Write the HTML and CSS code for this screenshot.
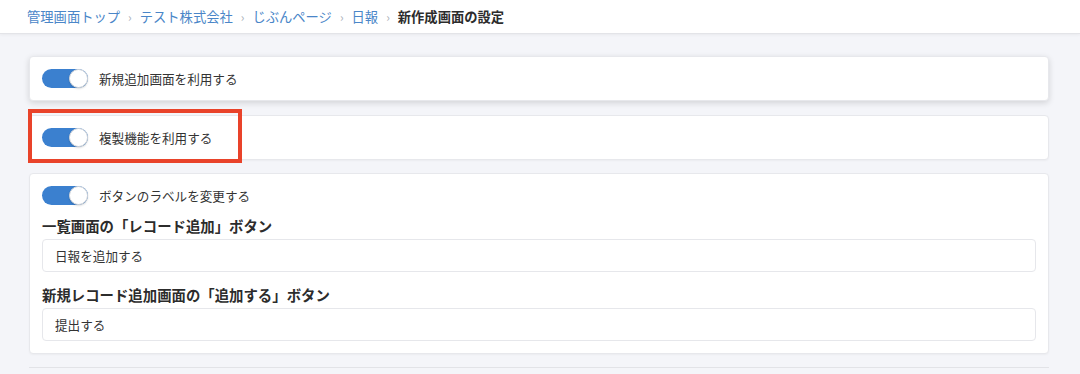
FILE: index.html
```html
<!DOCTYPE html>
<html lang="ja">
<head>
  <meta charset="UTF-8">
  <title>新作成画面の設定</title>
  <link rel="stylesheet" href="styles.css">
</head>
<body>
  <!-- Breadcrumb -->
  <nav class="breadcrumb">
    <a href="#">管理画面トップ</a>
    <span class="sep">›</span>
    <a href="#">テスト株式会社</a>
    <span class="sep">›</span>
    <a href="#">じぶんページ</a>
    <span class="sep">›</span>
    <a href="#">日報</a>
    <span class="sep">›</span>
    <span class="current">新作成画面の設定</span>
  </nav>

  <main class="content">
    <div class="card card-hover">
      <label class="switch-row">
        <span class="switch"><span class="knob"></span></span>
        <span>新規追加画面を利用する</span>
      </label>
    </div>

    <div class="card highlighted">
      <label class="switch-row">
        <span class="switch"><span class="knob"></span></span>
        <span>複製機能を利用する</span>
      </label>
      <div class="annotation"></div>
    </div>

    <div class="card">
      <label class="switch-row">
        <span class="switch"><span class="knob"></span></span>
        <span>ボタンのラベルを変更する</span>
      </label>
      <div class="field">
        <div class="field-label">一覧画面の「レコード追加」ボタン</div>
        <input class="field-input" type="text" value="日報を追加する">
      </div>
      <div class="field">
        <div class="field-label">新規レコード追加画面の「追加する」ボタン</div>
        <input class="field-input" type="text" value="提出する">
      </div>
    </div>

    <div class="divider"></div>
  </main>
</body>
</html>
```

FILE: styles.css
```css
/* General reset and layout */
* {
  margin: 0;
  padding: 0;
  box-sizing: border-box;
}
body {
  font-family: 'Noto Sans CJK JP', 'Noto Sans', sans-serif;
  background-color: #f4f5f9;
  color: #333;
  height: 374px;
  overflow: hidden;
}

/* Breadcrumb bar */
.breadcrumb {
  height: 34px;
  background-color: #fff;
  border-bottom: 1px solid #e3e4e8;
  box-shadow: 0 1px 3px rgba(0, 0, 0, 0.05);
  display: flex;
  align-items: center;
  padding-left: 27px;
  font-size: 13.3px;
}
.breadcrumb a {
  color: #4a86c8;
  text-decoration: none;
}
.breadcrumb .sep {
  color: #aab0b8;
  margin: 0 8px;
  font-size: 12px;
}
.breadcrumb .current {
  font-weight: bold;
  color: #2c2c2c;
}

.content {
  padding: 22px 31px 0 29px;
}

.card {
  position: relative;
  background-color: #fff;
  border: 1px solid #e7e8ec;
  border-radius: 4px;
  padding: 12px;
  margin-bottom: 13px;
  box-shadow: 0 1px 2px rgba(0, 0, 0, 0.04);
}
.card-hover {
  box-shadow: 0 2px 6px rgba(0, 0, 0, 0.14);
  margin-bottom: 14px;
}

.switch-row {
  display: flex;
  align-items: center;
  gap: 11px;
  font-size: 12.6px;
  color: #333;
  height: 19px;
}
.switch {
  position: relative;
  width: 46px;
  height: 19px;
  border-radius: 10px;
  background-color: #3b80cf;
  flex-shrink: 0;
}
.switch .knob {
  position: absolute;
  right: 0;
  top: 0;
  width: 19px;
  height: 19px;
  border-radius: 50%;
  background-color: #fff;
  border: 1px solid #d6d8dc;
  box-shadow: 0 1px 2px rgba(0, 0, 0, 0.15);
}

/* Red annotation box around the copy option */
.annotation {
  position: absolute;
  left: -2px;
  top: -7px;
  width: 214px;
  height: 54px;
  border: 4px solid #e9432a;
}

.field {
  margin-top: 11px;
}
.field + .field {
  margin-top: 13px;
}
.field-label {
  font-size: 14.4px;
  font-weight: bold;
  color: #2c2c2c;
  line-height: 20px;
  margin-bottom: 3px;
}
.field-input {
  display: block;
  width: 100%;
  height: 33px;
  border: 1px solid #e6e7eb;
  border-radius: 4px;
  padding: 0 12px;
  font-family: inherit;
  font-size: 12.6px;
  color: #333;
  background-color: #fff;
}

.divider {
  border-top: 1px solid #e2e3e7;
}
```
